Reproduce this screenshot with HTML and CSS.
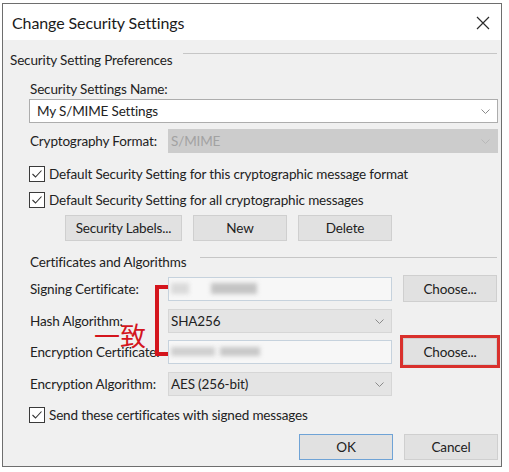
FILE: index.html
```html
<!DOCTYPE html>
<html>
<head>
<meta charset="utf-8">
<link rel="stylesheet" href="styles.css">
</head>
<body>
<div class="dialog">
  <div class="titlebar">
    <span class="title">Change Security Settings</span>
    <svg class="close" width="14" height="14" viewBox="0 0 14 14"><path d="M1 1 L13 13 M13 1 L1 13" stroke="#2b2b2b" stroke-width="1.2" fill="none"/></svg>
  </div>
  <div class="content">
    <div class="group-head"><span>Security Setting Preferences</span><div class="rule rule-a"></div></div>
    <div class="indent">
      <div class="label name-label">Security Settings Name:</div>
      <div class="combo white"><span>My S/MIME Settings</span><svg class="chev" width="9" height="5" viewBox="0 0 9 5"><path d="M0.5 0.5 L4.5 4.5 L8.5 0.5" stroke="#8a8a8a" fill="none"/></svg></div>
      <div class="row crypto">
        <span class="label lcol">Cryptography Format:</span>
        <div class="combo disabled grow"><span>S/MIME</span><svg class="chev" width="9" height="5" viewBox="0 0 9 5"><path d="M0.5 0.5 L4.5 4.5 L8.5 0.5" stroke="#b8b8b8" fill="none"/></svg></div>
      </div>
      <div class="check cb1"><span class="box"><svg width="14" height="14" viewBox="0 0 14 14"><path d="M2.5 7 L5.5 10 L11.5 3.5" stroke="#333" stroke-width="1.1" fill="none"/></svg></span><span>Default Security Setting for this cryptographic message format</span></div>
      <div class="check cb2"><span class="box"><svg width="14" height="14" viewBox="0 0 14 14"><path d="M2.5 7 L5.5 10 L11.5 3.5" stroke="#333" stroke-width="1.1" fill="none"/></svg></span><span>Default Security Setting for all cryptographic messages</span></div>
      <div class="btn-row">
        <div class="btn btn-labels">Security Labels...</div>
        <div class="btn">New</div>
        <div class="btn">Delete</div>
      </div>
    </div>
    <div class="group-head head2"><span class="head2-text">Certificates and Algorithms</span><div class="rule rule-b"></div></div>
    <div class="indent">
      <div class="row row-sign">
        <span class="label lcol">Signing Certificate:</span>
        <div class="field"><span class="blur b1"></span><span class="blur b2"></span></div>
        <div class="btn side">Choose...</div>
      </div>
      <div class="row row-hash">
        <span class="label lcol">Hash Algorithm:</span>
        <div class="combo gray mid"><span>SHA256</span><svg class="chev" width="9" height="5" viewBox="0 0 9 5"><path d="M0.5 0.5 L4.5 4.5 L8.5 0.5" stroke="#8a8a8a" fill="none"/></svg></div>
      </div>
      <div class="row row-enc">
        <span class="label lcol">Encryption Certificate:</span>
        <div class="field"><span class="blur b3"></span><span class="blur b4"></span></div>
        <div class="btn side hl">Choose...</div>
      </div>
      <div class="row row-alg">
        <span class="label lcol">Encryption Algorithm:</span>
        <div class="combo gray mid"><span>AES (256-bit)</span><svg class="chev" width="9" height="5" viewBox="0 0 9 5"><path d="M0.5 0.5 L4.5 4.5 L8.5 0.5" stroke="#8a8a8a" fill="none"/></svg></div>
      </div>
      <div class="check cb3"><span class="box"><svg width="14" height="14" viewBox="0 0 14 14"><path d="M2.5 7 L5.5 10 L11.5 3.5" stroke="#333" stroke-width="1.1" fill="none"/></svg></span><span>Send these certificates with signed messages</span></div>
    </div>
    <div class="footer">
      <div class="btn ok">OK</div>
      <div class="btn">Cancel</div>
    </div>
  </div>
  <div class="bracket"></div>
  <div class="note">一致</div>
</div>
</body>
</html>
```
FILE: styles.css
```css
body {
  margin: 0;
  background: #ffffff;
  font-family: Lato, "Noto Sans", sans-serif;
  font-size: 13.5px;
  letter-spacing: -0.15px;
  color: #222;
}
.dialog {
  margin: 3px 0 0 2px;
  width: 498px;
  height: 462px;
  border: 1px solid #6e6e6e;
  background: #f0f0f0;
  position: relative;
}
.titlebar {
  height: 36px;
  background: #fff;
  display: flex;
  align-items: center;
  justify-content: space-between;
  padding: 0 11px 0 9px;
}
.title {
  font-size: 16px;
  letter-spacing: -0.1px;
  color: #1a1a1a;
}
.close { margin-top: 1px; }
.content {
  padding: 10px 3px 0 7px;
}
.group-head {
  display: flex;
  height: 20px;
  line-height: 20px;
}
.rule {
  flex: 1;
  height: 1px;
  background: #c6c6c6;
  margin-left: 11px;
  margin-right: 1px;
}
.rule-a { margin-top: 3px; }
.head2 { margin-top: 11px; }
.head2-text { padding-left: 20px; }
.rule-b { margin-top: 5px; margin-left: 14px; }
.indent { margin-left: 19px; }
.label { line-height: 20px; padding-left: 1px; white-space: nowrap; }
.lcol { width: 138px; flex-shrink: 0; }
.name-label { margin-top: 9px; }
.row {
  display: flex;
  align-items: center;
}
.grow { flex: 1; }
.mid { width: 224px; }
.combo {
  height: 24px;
  box-sizing: border-box;
  display: flex;
  align-items: center;
  justify-content: space-between;
  padding: 0 7px 0 2px;
}
.combo.white {
  background: #fff;
  border: 1px solid #adadad;
  padding-left: 7px;
}
.combo.disabled {
  background: #cccccc;
  border: 1px solid #cccccc;
  color: #a2a2a2;
}
.combo.gray {
  background: #e4e4e4;
  border: 1px solid #d6d6d6;
}
.crypto { margin-top: 6px; }
.check {
  display: flex;
  align-items: center;
  height: 20px;
  gap: 4px;
}
.box {
  width: 16px;
  height: 16px;
  box-sizing: border-box;
  border: 1px solid #3a3a3a;
  background: #fff;
  display: flex;
  align-items: center;
  justify-content: center;
}
.cb1 { margin-top: 11px; }
.cb2 { margin-top: 6px; }
.cb3 { margin-top: 9px; }
.btn-row {
  display: flex;
  gap: 11px;
  margin: 5px 0 0 36px;
}
.btn {
  width: 94px;
  height: 26px;
  box-sizing: border-box;
  border: 1px solid #cfcfcf;
  background: #e1e1e1;
  display: flex;
  align-items: center;
  justify-content: center;
}
.btn-labels { width: 117px; }
.side { margin-left: 11px; height: 27px; }
.row-sign { margin-top: 3px; height: 27px; }
.row-hash { margin-top: 7px; }
.row-enc { margin-top: 5px; height: 27px; }
.row-alg { margin-top: 7px; }
.field {
  width: 224px;
  height: 24px;
  box-sizing: border-box;
  border: 1px solid #c6d2dd;
  background: #f7f7f7;
  display: flex;
  align-items: center;
  overflow: hidden;
}
.blur {
  display: block;
  height: 11px;
  filter: blur(2px);
}
.b1 { width: 18px; margin-left: 2px; background: #dadada; }
.b2 { width: 46px; margin-left: 22px; background: #c4c4c4; }
.b3 { width: 44px; margin-left: 2px; background: #cfcfcf; height: 9px; }
.b4 { width: 40px; margin-left: 5px; background: #c8c8c8; height: 9px; }
.hl {
  outline: 3px solid #d9302c;
}
.footer {
  display: flex;
  justify-content: flex-end;
  gap: 11px;
  margin-top: 9px;
}
.ok { border-color: #6fa3d6; }
.bracket {
  position: absolute;
  left: 152px;
  top: 281px;
  width: 13px;
  height: 71px;
  box-sizing: border-box;
  border: 4px solid #d4151d;
  border-right: none;
}
.note {
  position: absolute;
  left: 91px;
  top: 317px;
  font-family: "Noto Sans CJK SC", sans-serif;
  font-size: 26px;
  line-height: 28px;
  letter-spacing: 0;
  color: #d4151d;
}
```
